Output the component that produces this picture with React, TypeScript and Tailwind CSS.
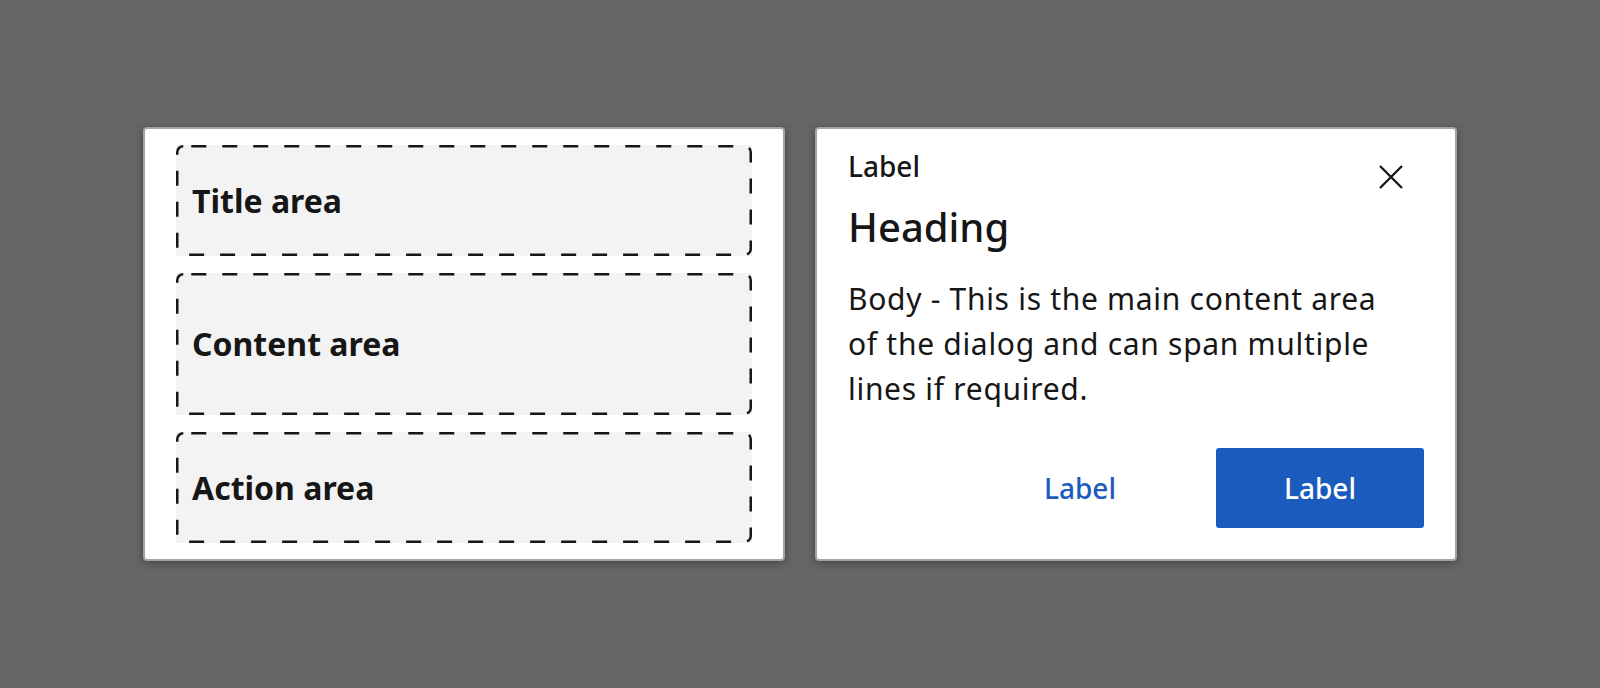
import React from "react";

// Anatomy sketch on the left, the actual dialog on the right
function Area({ label, h, rh }: { label: string; h: string; rh: number }) {
  return (
    <div className={`relative flex items-center bg-[#f3f3f3] pl-4 ${h}`}>
      <svg className="pointer-events-none absolute inset-0 overflow-visible" width="576" height={rh}>
        <rect
          x="1.25"
          y="1.25"
          width="573.5"
          height={rh - 2.5}
          rx="6"
          fill="none"
          stroke="#161616"
          strokeWidth="2.5"
          strokeDasharray="15 16"
          strokeDashoffset="-8"
        />
      </svg>
      <span className="relative text-[32px] leading-[40px] font-bold text-[#161616]">{label}</span>
    </div>
  );
}

export default function App() {
  return (
    <div className="flex h-screen w-full items-center justify-center bg-[#666666] font-['Noto_Sans',sans-serif] text-[#161616]">
      <div className="flex gap-[30px]">
        <div className="flex w-[642px] flex-col gap-[17px] rounded-[4px] border-2 border-[#a3a3a3] bg-white px-[31px] py-4 shadow-[0_2px_8px_rgba(0,0,0,0.35)]">
          <Area label="Title area" h="h-[111px]" rh={111} />
          <Area label="Content area" h="h-[142px]" rh={142} />
          <Area label="Action area" h="h-[111px]" rh={111} />
        </div>

        <div className="flex w-[642px] flex-col rounded-[4px] border-2 border-[#a3a3a3] bg-white px-[31px] pt-[21px] pb-[31px] shadow-[0_2px_8px_rgba(0,0,0,0.35)]">
          <div className="flex items-start justify-between">
            <span className="text-[28px] leading-[32px] font-medium">Label</span>
            <button className="mt-[15px] mr-[21px]" aria-label="Close">
              <svg width="24" height="24" viewBox="0 0 24 24">
                <path d="M1 1L23 23M23 1L1 23" stroke="#161616" strokeWidth="2.3" />
              </svg>
            </button>
          </div>
          <h2 className="mt-[14px] text-[40px] leading-[48px] font-medium">Heading</h2>
          <p className="mt-[25px] max-w-[552px] text-[30px] leading-[45px] tracking-[0.7px]">
            Body - This is the main content area of the dialog and can span multiple lines if required.
          </p>
          <div className="mt-auto flex justify-end gap-8">
            <button className="h-20 w-[208px] text-[28px] font-medium text-[#1a5bbd]">Label</button>
            <button className="h-20 w-[208px] rounded-[3px] bg-[#1a5bbd] text-[28px] font-medium text-white">
              Label
            </button>
          </div>
        </div>
      </div>
    </div>
  );
}
